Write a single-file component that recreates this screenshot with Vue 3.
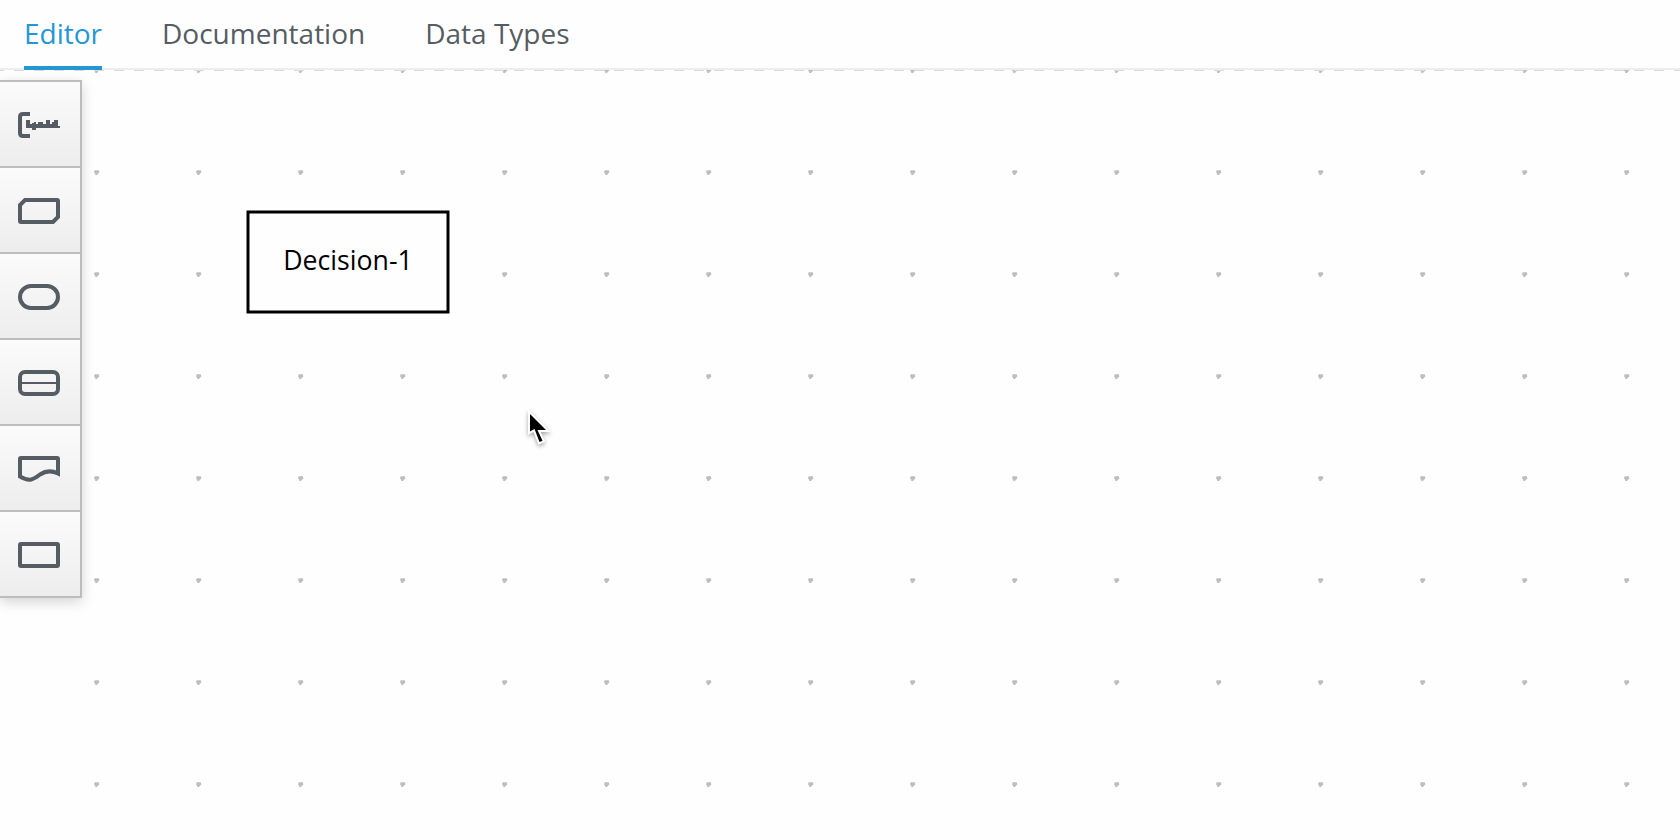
<script setup>
import { ref } from 'vue'

const tabs = ['Editor', 'Documentation', 'Data Types']
const activeTab = ref('Editor')
const tools = ['annotation', 'knowledge', 'input', 'function', 'source', 'decision']
</script>

<template>
  <div class="app">
    <nav class="tabs">
      <a
        v-for="tab in tabs"
        :key="tab"
        class="tab"
        :class="{ active: tab === activeTab }"
        @click="activeTab = tab"
      >{{ tab }}</a>
    </nav>
    <main class="workspace">
      <svg class="canvas" width="1680" height="770" viewBox="0 70 1680 770">
        <defs>
          <pattern id="grid" x="94" y="68" width="102" height="102" patternUnits="userSpaceOnUse">
            <path d="M1 .2H4.8Q5.4 .6 5.2 3L4 3.4 3 5H1.2V3.6L.2 3V1Z" fill="#bdbdbd" />
          </pattern>
        </defs>
        <rect y="70" width="1680" height="770" fill="url(#grid)" />
        <path d="M-6 70.5H1680" stroke="#dadada" stroke-dasharray="10 10" />
        <rect x="248" y="212" width="200" height="100" fill="#fefefe" stroke="#000" stroke-width="3" />
        <text class="node-label" x="348" y="270.4" text-anchor="middle">Decision-1</text>
      </svg>
      <aside class="palette">
        <button v-for="tool in tools" :key="tool" class="tool">
          <svg width="42" height="26" viewBox="0 0 42 26" fill="none" stroke="#555c63" stroke-width="4">
            <template v-if="tool === 'annotation'">
              <path d="M12 2H5Q2 2 2 5V21Q2 24 5 24H12" />
              <path d="M8 8H12V12H14V11H16V10H18V12H20V10H25V12H28V8H32V12H34V10H36V8H40V14H42V16H18V18H14V16H8Z" fill="#555c63" stroke="none" />
            </template>
            <path v-else-if="tool === 'knowledge'" d="M7 2H39Q40 2 40 3V19L35 24H3Q2 24 2 23V7Z" />
            <rect v-else-if="tool === 'input'" x="2" y="2" width="38" height="22" rx="11" />
            <template v-else-if="tool === 'function'">
              <rect x="2" y="2" width="38" height="22" rx="5" />
              <path d="M2 13H40" stroke-width="2" />
            </template>
            <path v-else-if="tool === 'source'" d="M2 20.5V3Q2 2 3 2H39Q40 2 40 3V17.5C34 14.5 28 14.5 22 18.5C16 23 12 26.5 2 20.5Z" />
            <rect v-else x="2" y="2" width="38" height="22" rx="1" />
          </svg>
        </button>
      </aside>
      <svg class="cursor" width="36" height="44" viewBox="520 406 36 44">
        <path d="M530 414V431.5L534.5 429 539.5 442 542.5 440.7 537.5 430H546Z" fill="#000" stroke="#fff" stroke-width="4" paint-order="stroke" />
      </svg>
    </main>
  </div>
</template>

<style>
body {
  background: #fefefe;
}
</style>

<style scoped>
.app {
  width: 1680px;
  height: 840px;
  overflow: hidden;
  background: #fefefe;
  font-family: "Open Sans", "Noto Sans", sans-serif;
}
.tabs {
  display: flex;
  gap: 60px;
  height: 70px;
  padding-left: 24px;
  box-sizing: border-box;
  border-bottom: 2px solid #ededed;
}
.tab {
  height: 70px;
  box-sizing: border-box;
  font-size: 28px;
  line-height: 66px;
  color: #555c62;
  cursor: pointer;
  white-space: nowrap;
}
.tab.active {
  color: #2496d4;
  border-bottom: 4px solid #2496d4;
}
.workspace {
  position: relative;
  height: 770px;
}
.canvas {
  display: block;
}
.node-label {
  font-size: 26.67px;
}
.palette {
  position: absolute;
  top: 10px;
  left: 0;
  width: 82px;
  height: 518px;
  box-sizing: border-box;
  border-top: 2px solid #bdbdbd;
  border-right: 2px solid #bdbdbd;
  box-shadow: 0 4px 12px rgba(0, 0, 0, 0.17);
}
.tool {
  display: flex;
  width: 80px;
  height: 86px;
  margin: 0;
  padding: 30px 0 0 18px;
  box-sizing: border-box;
  border: 0;
  border-bottom: 2px solid #bdbdbd;
  border-radius: 0;
  background: linear-gradient(#fbfbfb, #ededed);
}
.cursor {
  position: absolute;
  left: 520px;
  top: 336px;
  filter: drop-shadow(0 2px 2px rgba(0, 0, 0, 0.35));
}
</style>
